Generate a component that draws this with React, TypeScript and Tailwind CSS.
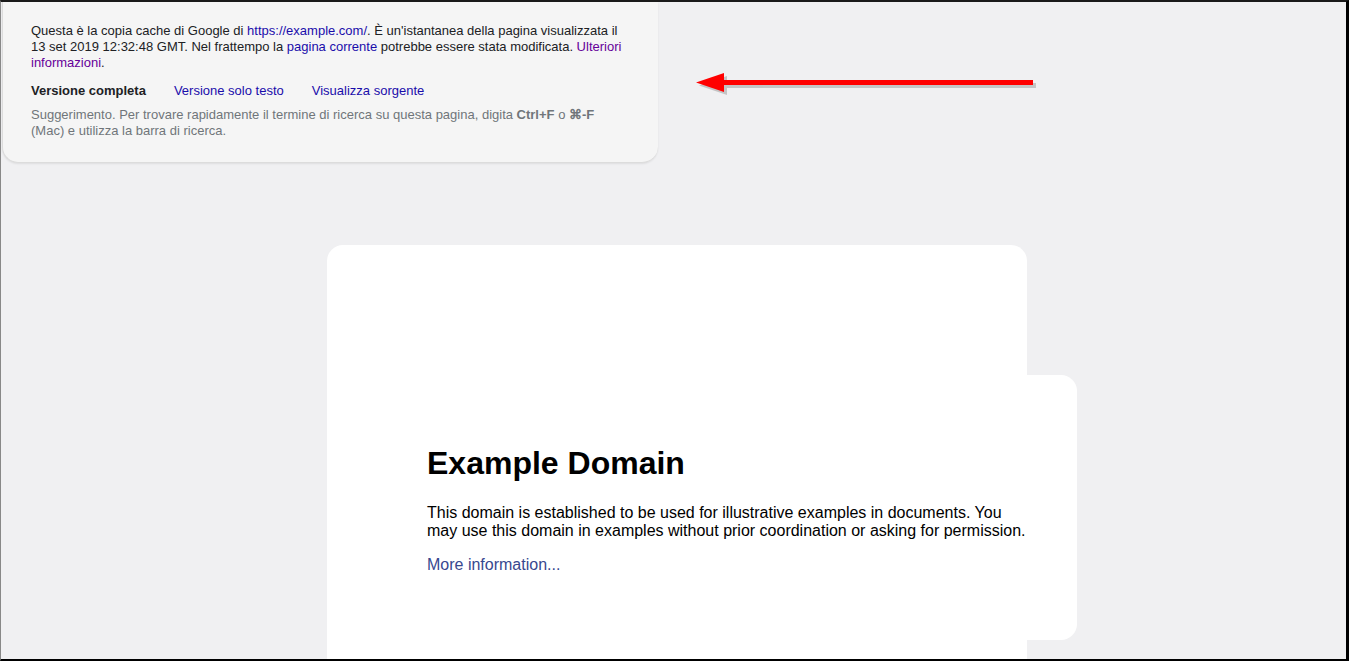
export default function App() {
  return (
    <div className="relative h-[661px] w-[1349px] overflow-hidden border-t-2 border-l border-r-[3px] border-b-2 border-t-[#1a1a1a] border-l-[#888] border-r-black border-b-black bg-[#f0f0f2] font-['Liberation_Sans',Arial,sans-serif]">
      {/* Cache header */}
      <div className="ml-px h-[161px] w-[656px] rounded-b-2xl border-b border-l border-[#dcdcdc] bg-[#f5f5f5] pl-[28px] pt-[21px] text-[13px] leading-[16px] text-[#202124] shadow-[0_1px_2px_rgba(0,0,0,0.08)]">
        <div className="w-[600px]">
          Questa è la copia cache di Google di <span className="text-[#1a0dab]">https://example.com/</span>. È un'istantanea della pagina visualizzata il 13 set 2019 12:32:48 GMT. Nel frattempo la <span className="text-[#1a0dab]">pagina corrente</span> potrebbe essere stata modificata. <span className="text-[#660099]">Ulteriori informazioni</span>.
        </div>
        <div className="mt-[12px] flex gap-[28px]">
          <span className="font-bold text-[#202124]">Versione completa</span>
          <span className="text-[#1a0dab]">Versione solo testo</span>
          <span className="text-[#1a0dab]">Visualizza sorgente</span>
        </div>
        <div className="mt-[8px] w-[585px] text-[#70757a]">
          Suggerimento. Per trovare rapidamente il termine di ricerca su questa pagina, digita <b>Ctrl+F</b> o <b>⌘-F</b> (Mac) e utilizza la barra di ricerca.
        </div>
      </div>

      {/* Arrow */}
      <svg className="absolute left-[690px] top-[66px]" width="360" height="36" viewBox="0 0 360 36">
        <g transform="translate(3,3)" fill="#9a9a9a" opacity="0.5">
          <rect x="30" y="12" width="312" height="5" />
          <polygon points="5,14.5 33,5 33,24" />
        </g>
        <rect x="30" y="12" width="312" height="5" fill="#ff0000" />
        <polygon points="5,14.5 33,5 33,24" fill="#ff0000" />
      </svg>

      {/* Page card */}
      <div className="ml-[326px] mt-[82px] flex">
        <div className="h-[430px] w-[700px] rounded-t-2xl bg-white pl-[100px] pt-[200px]">
          <h1 className="text-[32px] font-bold leading-[37px] text-black">Example Domain</h1>
          <p className="mt-[22px] w-[600px] text-[16px] leading-[18px] text-black">
            This domain is established to be used for illustrative examples in documents. You may use this domain in examples without prior coordination or asking for permission.
          </p>
          <p className="mt-[16px] text-[16px] leading-[18px] text-[#38488f]">More information...</p>
        </div>
        <div className="mt-[130px] h-[265px] w-[50px] rounded-r-2xl bg-white" />
      </div>
    </div>
  );
}
